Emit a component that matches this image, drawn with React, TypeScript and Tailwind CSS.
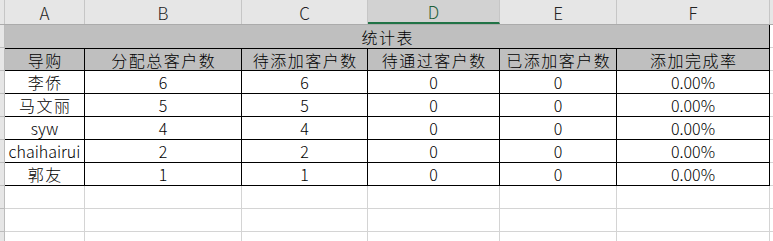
import React from "react"

// column widths of the sheet, A..F
const cols = [
  { key: "A", w: "w-[80px]" },
  { key: "B", w: "w-[157px]" },
  { key: "C", w: "w-[126px]" },
  { key: "D", w: "w-[132px]" },
  { key: "E", w: "w-[117px]" },
  { key: "F", w: "w-[153px]" },
]

const headers = ["导购", "分配总客户数", "待添加客户数", "待通过客户数", "已添加客户数", "添加完成率"]

const rows = [
  ["李侨", "6", "6", "0", "0", "0.00%"],
  ["马文丽", "5", "5", "0", "0", "0.00%"],
  ["syw", "4", "4", "0", "0", "0.00%"],
  ["chaihairui", "2", "2", "0", "0", "0.00%"],
  ["郭友", "1", "1", "0", "0", "0.00%"],
]

// CJK cells get a bit of tracking so they run as wide as the sheet font
const isCjk = (s: string) => /[\u4e00-\u9fff]/.test(s)

function RowHead() {
  return <div className="w-[5px] shrink-0 h-[23px] bg-[#e6e6e6] border-r border-b border-[#bcbcbc]" />
}

function Filler() {
  return <div className="flex-1 h-[23px] border-b border-[#d4d4d4]" />
}

export default function App() {
  return (
    <div
      className="w-[773px] h-[241px] overflow-hidden bg-white text-black font-light leading-none text-[16px]"
      style={{ fontFamily: '"Noto Sans CJK SC", "Liberation Sans", sans-serif' }}
    >
      {/* column letters */}
      <div className="flex h-[25px] bg-[#e6e6e6] border-b border-[#ababab]">
        <div className="w-[5px] shrink-0 border-r border-[#c6c6c6]" />
        {cols.map((c) => (
          <div
            key={c.key}
            className={`${c.w} shrink-0 flex items-center justify-center border-r border-[#c6c6c6] text-[17px] ${
              c.key === "D" ? "bg-[#d2d2d2] text-[#1e5e3a] border-b-2 border-b-[#217346]" : "text-[#222]"
            }`}
          >
            {c.key}
          </div>
        ))}
        <div className="flex-1" />
      </div>

      {/* merged title */}
      <div className="flex">
        <RowHead />
        <div className="w-[765px] shrink-0 h-[23px] bg-[#bfbfbf] border-r border-black flex items-center justify-center tracking-[1.5px] pl-[1.5px]">
          统计表
        </div>
        <Filler />
      </div>

      {/* header row */}
      <div className="flex">
        <RowHead />
        {cols.map((c, i) => (
          <div
            key={c.key}
            className={`${c.w} shrink-0 h-[23px] bg-[#bfbfbf] border-t border-r border-b border-black flex items-center justify-center whitespace-nowrap tracking-[1.5px] pl-[1.5px]`}
          >
            {headers[i]}
          </div>
        ))}
        <Filler />
      </div>

      {rows.map((r, ri) => (
        <div key={ri} className="flex">
          <RowHead />
          {cols.map((c, i) => (
            <div
              key={c.key}
              className={`${c.w} shrink-0 h-[23px] border-r border-b border-black flex items-center justify-center whitespace-nowrap ${
                isCjk(r[i]) ? "tracking-[1.5px] pl-[1.5px]" : ""
              }`}
            >
              {r[i]}
            </div>
          ))}
          <Filler />
        </div>
      ))}

      {/* empty sheet rows */}
      {[0, 1, 2].map((n) => (
        <div key={n} className="flex">
          <RowHead />
          {cols.map((c) => (
            <div key={c.key} className={`${c.w} shrink-0 h-[23px] border-r border-b border-[#d4d4d4]`} />
          ))}
          <Filler />
        </div>
      ))}
    </div>
  )
}
